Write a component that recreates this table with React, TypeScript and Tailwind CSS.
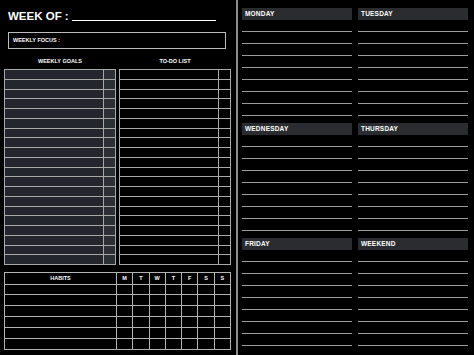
import React from 'react';

const days = [
  ['MONDAY', 'TUESDAY'],
  ['WEDNESDAY', 'THURSDAY'],
  ['FRIDAY', 'WEEKEND'],
];

const rows = Array.from({ length: 20 });
const habitRows = Array.from({ length: 6 });
const weekLetters = ['M', 'T', 'W', 'T', 'F', 'S', 'S'];

const ListTable = ({ filled }: { filled: boolean }) => (
  <div className="grid grid-cols-[1fr_11px] grid-rows-20 gap-px p-px bg-[#a9a9a9] w-[112px] h-[196px]">
    {rows.map((_, i) => (
      <React.Fragment key={i}>
        <div className={filled ? 'bg-[#23262c]' : 'bg-black'} />
        <div className={filled ? 'bg-[#2c2f34]' : 'bg-black'} />
      </React.Fragment>
    ))}
  </div>
);

const DayBlock = ({ name }: { name: string }) => (
  <div className="flex flex-col mb-[7px]">
    <div className="h-[12px] bg-[#2a2c30] flex items-center pl-[3px]">
      <span className="text-[6.5px] font-bold text-white leading-none tracking-[0.2px]">{name}</span>
    </div>
    {Array.from({ length: 8 }).map((_, i) => (
      <div key={i} className="h-[12px] border-b-[1.5px] border-[#9d9d9d]" />
    ))}
  </div>
);

export default function App() {
  return (
    <div
      className="flex w-[474px] h-[355px] bg-black text-white overflow-hidden"
      style={{ fontFamily: '"Liberation Sans", Arial, sans-serif' }}
    >
      {/* left page */}
      <div className="w-[236px] flex flex-col">
        <div className="mt-[10px] ml-[8px] flex items-end h-[12px]">
          <span className="text-[11.5px] font-bold leading-none">WEEK OF :</span>
          <div className="ml-[3px] w-[144px] h-px bg-white mb-[1px]" />
        </div>

        <div className="mt-[10px] ml-[8px] w-[218px] h-[17px] border border-[#bdbdbd] flex items-center pl-[4px]">
          <span className="text-[5.5px] font-bold leading-none">WEEKLY FOCUS :</span>
        </div>

        <div className="ml-[4px] flex gap-[3px] h-[20px] items-end pb-[5px]">
          <div className="w-[112px] text-center text-[5.5px] font-bold leading-none">WEEKLY GOALS</div>
          <div className="w-[112px] text-center text-[5.5px] font-bold leading-none">TO-DO LIST</div>
        </div>

        <div className="ml-[4px] flex gap-[3px]">
          <ListTable filled />
          <ListTable filled={false} />
        </div>

        <div className="mt-[7px] ml-[4px] grid grid-cols-[111px_repeat(7,1fr)] grid-rows-[10.5px_repeat(6,1fr)] gap-px p-px bg-[#b3b3b3] w-[227px] h-[78px]">
          <div className="bg-black flex items-center justify-center text-[5.5px] font-bold leading-none">HABITS</div>
          {weekLetters.map((d, i) => (
            <div key={i} className="bg-black flex items-center justify-center text-[5.5px] font-bold leading-none">
              {d}
            </div>
          ))}
          {habitRows.map((_, r) =>
            Array.from({ length: 8 }).map((_, c) => <div key={`${r}-${c}`} className="bg-black" />)
          )}
        </div>
      </div>

      {/* divider */}
      <div className="w-[2px] bg-[#8c8c8c]" />

      {/* right page */}
      <div className="pl-[4px] pt-[8px]">
        {days.map((pair, i) => (
          <div key={i} className="grid grid-cols-[110px_110px] gap-x-[6px]">
            <DayBlock name={pair[0]} />
            <DayBlock name={pair[1]} />
          </div>
        ))}
      </div>
    </div>
  );
}
